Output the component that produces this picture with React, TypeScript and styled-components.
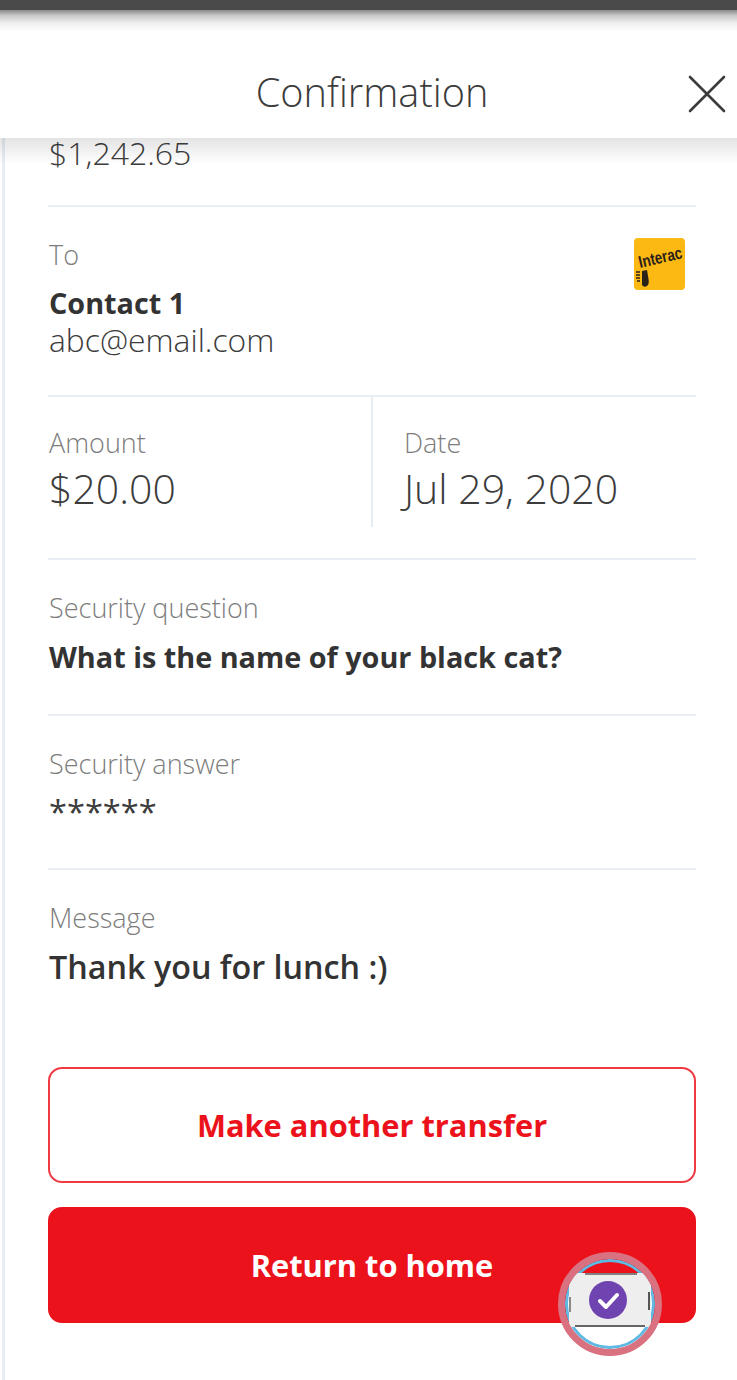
import React from 'react';
import styled, { createGlobalStyle } from 'styled-components';

const GlobalStyle = createGlobalStyle`
  html, body {
    margin: 0;
    padding: 0;
    background: #ffffff;
    font-family: "Open Sans", "Liberation Sans", sans-serif;
    overflow: hidden;
  }
`;

const Page = styled.div`
  position: relative;
  width: 737px;
  height: 1380px;
  overflow: hidden;
  background: #ffffff;
`;

const StatusBar = styled.div`
  height: 10px;
  background: #4a4a4a;
`;

const StatusFade = styled.div`
  height: 22px;
  background: linear-gradient(#8a8a8a, #c8c8c8 25%, #efefef 60%, #ffffff);
`;

const Header = styled.header`
  position: relative;
  z-index: 2;
  height: 106px;
  box-sizing: border-box;
  padding: 14px 0 0 7px;
  display: flex;
  align-items: center;
  justify-content: center;
  background: #ffffff;

  &::after {
    content: '';
    position: absolute;
    left: 0;
    right: 0;
    top: 100%;
    height: 26px;
    background: linear-gradient(rgba(0, 0, 0, 0.11), rgba(0, 0, 0, 0));
    pointer-events: none;
  }
`;

const Title = styled.h1`
  margin: 0;
  font-size: 39.7px;
  font-weight: 300;
  color: #3c3c3c;
`;

const CloseButton = styled.button`
  position: absolute;
  right: 10px;
  top: 42px;
  width: 40px;
  height: 40px;
  padding: 0;
  border: 0;
  background: none;
  color: #3c3c3c;
`;

const Body = styled.main`
  margin-left: 2px;
  height: 1242px;
  width: 648px;
  padding: 0 41px 0 43px;
  border-left: 3px solid #e6edf4;
`;

const Balance = styled.div`
  height: 67px;
  margin-left: 1px;
  font-size: 32px;
  font-weight: 300;
  line-height: 30px;
  color: #3c3c3c;
`;

const Section = styled.section<{ $height: number }>`
  position: relative;
  height: ${(p) => p.$height}px;
  box-sizing: border-box;
  padding-top: 30px;
  border-top: 2px solid #e9eef5;
`;

const Label = styled.div`
  margin-left: 1px;
  font-size: 27px;
  font-weight: 300;
  line-height: 36px;
  color: #7d7d7d;
`;

const BoldValue = styled.div<{ $gap?: number }>`
  margin: ${(p) => p.$gap ?? 0}px 0 0 1px;
  font-size: 28.8px;
  font-weight: 700;
  line-height: 40px;
  color: #333333;
`;

const ContactName = styled(BoldValue)`
  margin-top: 12px;
  line-height: 36px;
`;

const PlainValue = styled.div`
  margin: 1px 0 0 1px;
  font-size: 31.8px;
  font-weight: 300;
  line-height: 36px;
  color: #3c3c3c;
`;

const MaskedValue = styled.div`
  margin: 12px 0 0 1px;
  font-size: 32.6px;
  font-weight: 400;
  line-height: 36px;
  color: #3c3c3c;
`;

const MediumValue = styled.div`
  margin: 8px 0 0 1px;
  font-size: 32.3px;
  font-weight: 600;
  line-height: 44px;
  color: #333333;
`;

const Split = styled.section`
  height: 163px;
  box-sizing: border-box;
  border-top: 2px solid #e9eef5;
  display: grid;
  grid-template-columns: 323px 1fr;
`;

const SplitCell = styled.div<{ $divided?: boolean }>`
  height: 130px;
  box-sizing: border-box;
  padding-top: 28px;
  padding-left: ${(p) => (p.$divided ? '30px' : '0')};
  border-left: ${(p) => (p.$divided ? '2px solid #e6edf4' : '0')};
`;

const BigValue = styled.div`
  margin-left: 1px;
  font-size: 41px;
  font-weight: 300;
  line-height: 54px;
  color: #3c3c3c;
`;

const InteracBadge = styled.svg`
  position: absolute;
  right: 11px;
  top: 31px;
  width: 51px;
  height: 52px;
`;

const Actions = styled.div`
  display: flex;
  flex-direction: column;
  gap: 24px;
  margin-top: 24px;
`;

const ActionButton = styled.button<{ $filled?: boolean }>`
  height: 116px;
  border-radius: 14px;
  border: 2px solid ${(p) => (p.$filled ? '#ec121b' : '#ef3a42')};
  background: ${(p) => (p.$filled ? '#ec121b' : '#ffffff')};
  color: ${(p) => (p.$filled ? '#ffffff' : '#ec121b')};
  font-family: inherit;
  font-size: 30.8px;
  font-weight: 700;
`;

const RecordingMark = styled.div`
  position: absolute;
  left: 558px;
  top: 1252px;
  width: 104px;
  height: 104px;
  box-sizing: border-box;
  border-radius: 50%;
  border: 7px solid #d97180;
  overflow: hidden;
`;

const RecordingInner = styled.div`
  width: 100%;
  height: 100%;
  box-sizing: border-box;
  border-radius: 50%;
  border: 3px solid #5fb9e2;
  padding-bottom: 8px;
  background: linear-gradient(#ec121b 0 13px, #ffffff 13px);
  display: flex;
  align-items: center;
  justify-content: center;
`;

const RecordingWindow = styled.div`
  flex: none;
  width: 82px;
  height: 54px;
  display: flex;
  align-items: center;
  justify-content: center;
  background-color: #eeeeee;
  background-image:
    linear-gradient(#808080, #808080),
    linear-gradient(#666666, #666666),
    linear-gradient(#8a8a8a, #8a8a8a),
    linear-gradient(#555555, #555555);
  background-repeat: no-repeat;
  background-size: 52px 2px, 70px 2px, 2px 15px, 2px 18px;
  background-position: 16px 0, 6px 52px, 0 24px, 79px 19px;

  svg {
    margin-left: -4px;
  }
`;

const App = () => (
  <Page>
    <GlobalStyle />
    <StatusBar />
    <StatusFade />
    <Header>
      <Title>Confirmation</Title>
      <CloseButton aria-label="Close">
        <svg width="40" height="40" viewBox="0 0 40 40" fill="none" stroke="currentColor" strokeWidth="2.6" strokeLinecap="round">
          <path d="M3 3L37 37M37 3L3 37" />
        </svg>
      </CloseButton>
    </Header>
    <Body>
      <Balance>$1,242.65</Balance>
      <Section $height={190}>
        <Label>To</Label>
        <ContactName>Contact 1</ContactName>
        <PlainValue>abc@email.com</PlainValue>
        <InteracBadge viewBox="0 0 51 52">
          <rect x="0" y="0" width="51" height="52" rx="4" fill="#fdb913" />
          <text
            transform="translate(6 30) rotate(-13) scale(1 1.25)"
            fontFamily="Liberation Sans, sans-serif"
            fontSize="13.5"
            fontWeight="700"
            fill="#2a2118"
          >
            Interac
          </text>
          <path d="M8 33l5-1 1.5 9q1 5-1.5 7q-3 2-5-1z" fill="#2a2118" />
          <path d="M2 34h4M2 37h4M2 40h4M3 43h3" stroke="#2a2118" strokeWidth="1.4" />
        </InteracBadge>
      </Section>
      <Split>
        <SplitCell>
          <Label>Amount</Label>
          <BigValue>$20.00</BigValue>
        </SplitCell>
        <SplitCell $divided>
          <Label>Date</Label>
          <BigValue>Jul 29, 2020</BigValue>
        </SplitCell>
      </Split>
      <Section $height={156}>
        <Label>Security question</Label>
        <BoldValue $gap={11}>What is the name of your black cat?</BoldValue>
      </Section>
      <Section $height={154}>
        <Label>Security answer</Label>
        <MaskedValue>******</MaskedValue>
      </Section>
      <Section $height={175}>
        <Label>Message</Label>
        <MediumValue>Thank you for lunch :)</MediumValue>
      </Section>
      <Actions>
        <ActionButton>Make another transfer</ActionButton>
        <ActionButton $filled>Return to home</ActionButton>
      </Actions>
    </Body>
    <RecordingMark>
      <RecordingInner>
        <RecordingWindow>
          <svg width="38" height="38" viewBox="0 0 38 38">
            <circle cx="19" cy="19" r="19" fill="#7044b0" />
            <path d="M11 20l6 6 11-12" fill="none" stroke="#ffffff" strokeWidth="4" strokeLinecap="round" strokeLinejoin="round" />
          </svg>
        </RecordingWindow>
      </RecordingInner>
    </RecordingMark>
  </Page>
);

export default App;
